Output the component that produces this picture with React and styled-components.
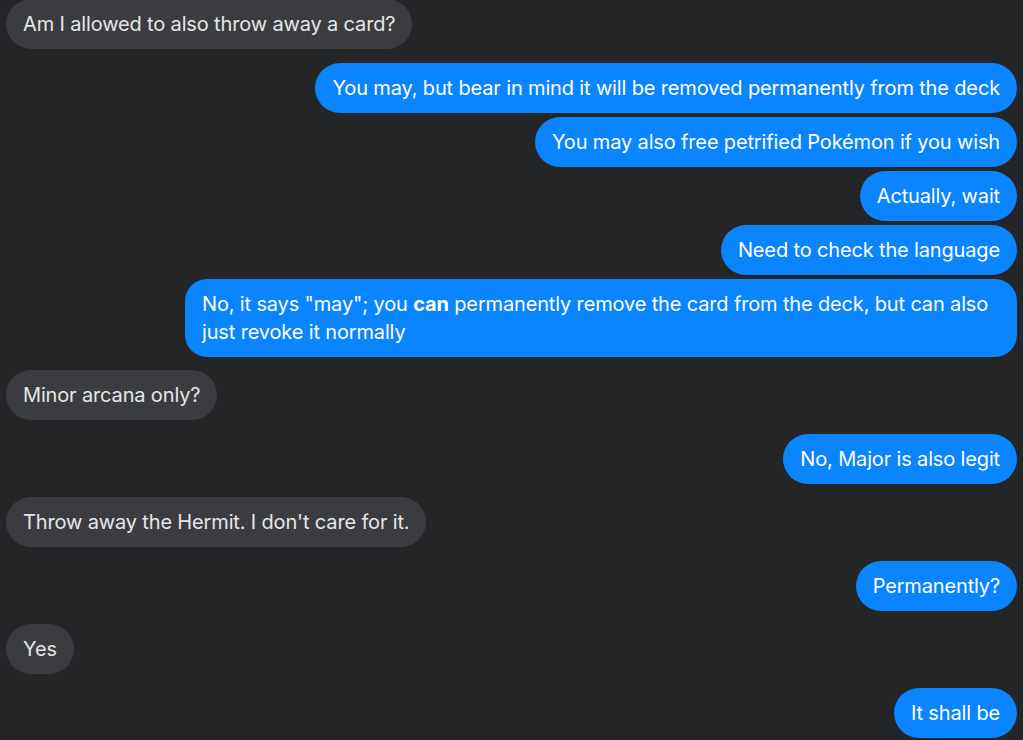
import React from "react";
import styled, { createGlobalStyle } from "styled-components";

const Global = createGlobalStyle`
  html, body { margin: 0; padding: 0; background: #242527; }
  body { font-family: Inter, "Noto Sans", sans-serif; }
`;

const Thread = styled.div`
  display: flex;
  flex-direction: column;
  padding: 0 6px;
  margin-top: -1px;
  height: 741px;
  overflow: hidden;
  background: #242527;
`;

const Group = styled.div`
  display: flex;
  flex-direction: column;
  align-items: ${(p) => (p.$mine ? "flex-end" : "flex-start")};
  gap: 4px;
  margin-bottom: 13.5px;
`;

const Bubble = styled.div`
  box-sizing: border-box;
  max-width: 832px;
  padding: 11px 17px;
  border-radius: ${(p) => (p.$multi ? "22px" : "25px")};
  font-size: 20px;
  line-height: 28px;
  letter-spacing: -0.15px;
  background: ${(p) => (p.$mine ? "#0a84ff" : "#3b3c3f")};
  color: ${(p) => (p.$mine ? "#ffffff" : "#e6e6e8")};
  b { font-weight: 700; }
`;

const groups = [
  { mine: false, msgs: ["Am I allowed to also throw away a card?"] },
  {
    mine: true,
    msgs: [
      "You may, but bear in mind it will be removed permanently from the deck",
      "You may also free petrified Pokémon if you wish",
      "Actually, wait",
      "Need to check the language",
      "__multi__",
    ],
  },
  { mine: false, msgs: ["Minor arcana only?"] },
  { mine: true, msgs: ["No, Major is also legit"] },
  { mine: false, msgs: ["Throw away the Hermit. I don't care for it."] },
  { mine: true, msgs: ["Permanently?"] },
  { mine: false, msgs: ["Yes"] },
  { mine: true, msgs: ["It shall be"] },
];

export default function App() {
  return (
    <>
      <Global />
      <Thread>
        {groups.map((g, i) => (
          <Group key={i} $mine={g.mine}>
            {g.msgs.map((m, j) =>
              m === "__multi__" ? (
                <Bubble key={j} $mine={g.mine} $multi>
                  No, it says "may"; you <b>can</b> permanently remove the card from the deck, but can also just revoke it normally
                </Bubble>
              ) : (
                <Bubble key={j} $mine={g.mine}>
                  {m}
                </Bubble>
              )
            )}
          </Group>
        ))}
      </Thread>
    </>
  );
}
